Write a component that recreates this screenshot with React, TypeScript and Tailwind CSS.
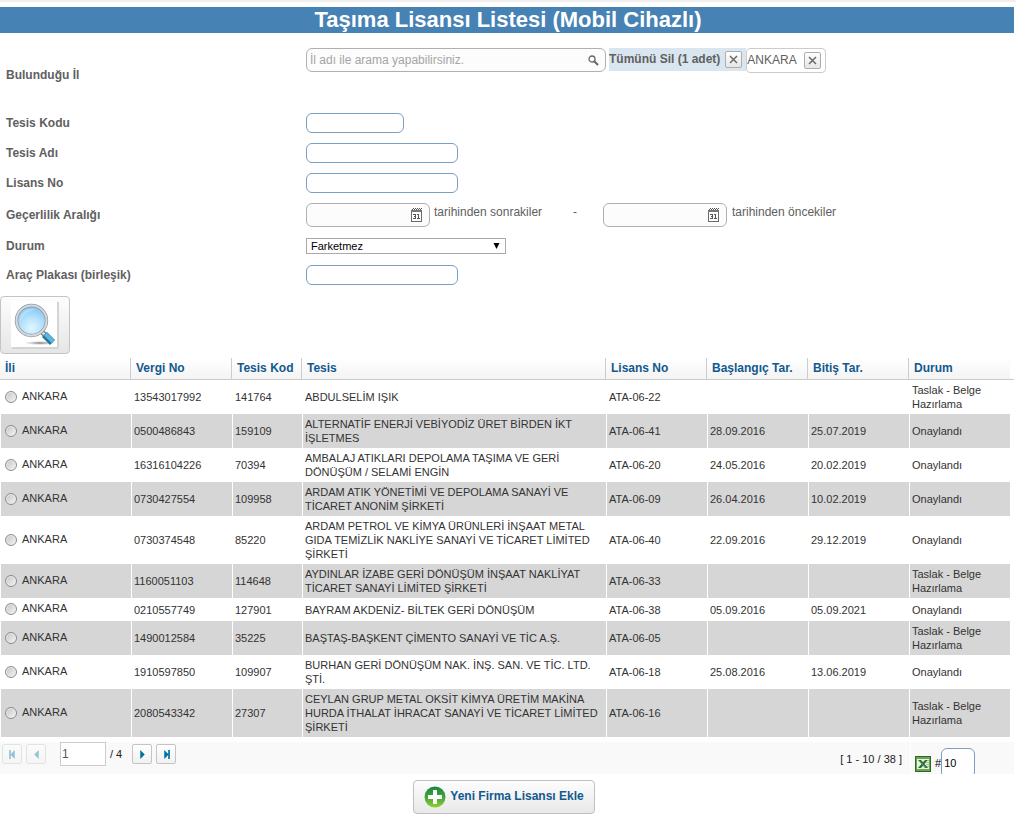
import React from "react";

type Row = {
  tax: string;
  code: string;
  name: string;
  license: string;
  start?: string;
  end?: string;
  status: string;
};

const rows: Row[] = [
  { tax: "13543017992", code: "141764", name: "ABDULSELİM IŞIK", license: "ATA-06-22", status: "Taslak - Belge Hazırlama" },
  { tax: "0500486843", code: "159109", name: "ALTERNATİF ENERJİ VEBİYODİZ ÜRET BİRDEN İKT İŞLETMES", license: "ATA-06-41", start: "28.09.2016", end: "25.07.2019", status: "Onaylandı" },
  { tax: "16316104226", code: "70394", name: "AMBALAJ ATIKLARI DEPOLAMA TAŞIMA VE GERİ DÖNÜŞÜM / SELAMİ ENGİN", license: "ATA-06-20", start: "24.05.2016", end: "20.02.2019", status: "Onaylandı" },
  { tax: "0730427554", code: "109958", name: "ARDAM ATIK YÖNETİMİ VE DEPOLAMA SANAYİ VE TİCARET ANONİM ŞİRKETİ", license: "ATA-06-09", start: "26.04.2016", end: "10.02.2019", status: "Onaylandı" },
  { tax: "0730374548", code: "85220", name: "ARDAM PETROL VE KİMYA ÜRÜNLERİ İNŞAAT METAL GIDA TEMİZLİK NAKLİYE SANAYİ VE TİCARET LİMİTED ŞİRKETİ", license: "ATA-06-40", start: "22.09.2016", end: "29.12.2019", status: "Onaylandı" },
  { tax: "1160051103", code: "114648", name: "AYDINLAR İZABE GERİ DÖNÜŞÜM İNŞAAT NAKLİYAT TİCARET SANAYİ LİMİTED ŞİRKETİ", license: "ATA-06-33", status: "Taslak - Belge Hazırlama" },
  { tax: "0210557749", code: "127901", name: "BAYRAM AKDENİZ- BİLTEK GERİ DÖNÜŞÜM", license: "ATA-06-38", start: "05.09.2016", end: "05.09.2021", status: "Onaylandı" },
  { tax: "1490012584", code: "35225", name: "BAŞTAŞ-BAŞKENT ÇİMENTO SANAYİ VE TİC A.Ş.", license: "ATA-06-05", status: "Taslak - Belge Hazırlama" },
  { tax: "1910597850", code: "109907", name: "BURHAN GERİ DÖNÜŞÜM NAK. İNŞ. SAN. VE TİC. LTD. ŞTİ.", license: "ATA-06-18", start: "25.08.2016", end: "13.06.2019", status: "Onaylandı" },
  { tax: "2080543342", code: "27307", name: "CEYLAN GRUP METAL OKSİT KİMYA ÜRETİM MAKİNA HURDA İTHALAT İHRACAT SANAYİ VE TİCARET LİMİTED ŞİRKETİ", license: "ATA-06-16", status: "Taslak - Belge Hazırlama" },
];

const columns = ["İli", "Vergi No", "Tesis Kod", "Tesis", "Lisans No", "Başlangıç Tar.", "Bitiş Tar.", "Durum"];

const inputClass = "h-5 rounded-md border border-[#7a9fc2] bg-white px-1 outline-none";

function Field({ id, label, height, children }: { id: string; label: string; height: string; children: React.ReactNode }) {
  return (
    <div className={`flex items-center ${height}`}>
      <label htmlFor={id} className="w-[300px] shrink-0 font-bold">
        {label}
      </label>
      {children}
    </div>
  );
}

function CalendarIcon() {
  return (
    <svg width="12" height="14" viewBox="0 0 12 14" shapeRendering="crispEdges">
      <path d="M0.5 3.500h10v10h-10z" fill="#fdfdfd" stroke="#6a6a6a" />
      <path d="M0 2h11v2H0z" fill="#777" />
      <path d="M1 1h1v1H1zM3 1h1v1H3zM5 1h1v1H5zM7 1h1v1H7zM9 1h1v1H9zM2 0h1v1H2zM4 0h1v1H4zM6 0h1v1H6zM8 0h1v1H8zM10 0h1v1h-1z" fill="#555" />
      <path d="M2 6h3v5H2v-1h2V9H3V8h1V7H2zM6 6h2v4h1v1H6v-1h1V7H6z" fill="#555" />
    </svg>
  );
}

function DateBox({ id, label }: { id: string; label: string }) {
  return (
    <div className="flex h-6 w-[124px] items-center rounded-md border border-[#b0b0b0] bg-[#fcfcfc] pr-1.5">
      <input id={id} aria-label={label} className="h-full w-full min-w-0 bg-transparent px-1 outline-none" />
      <button type="button" aria-label="Takvim" className="shrink-0">
        <CalendarIcon />
      </button>
    </div>
  );
}

function CloseButton({ label }: { label: string }) {
  return (
    <button
      type="button"
      aria-label={label}
      className="flex size-[17px] items-center justify-center rounded-xs border border-[#adadad] bg-linear-to-b from-white to-[#e6e6e6]"
    >
      <svg width="9" height="9" viewBox="0 0 9 9">
        <path d="M1 1l7 7M8 1l-7 7" stroke="#6a6a6a" strokeWidth="1.500" />
      </svg>
    </button>
  );
}

function PagerButton({ label, path, disabled }: { label: string; path: string; disabled?: boolean }) {
  return (
    <button
      type="button"
      aria-label={label}
      disabled={disabled}
      className="flex size-5 items-center justify-center rounded-xs border border-[#c4c4c4] bg-linear-to-b from-white to-[#f1f1f1] text-[#00729f] disabled:opacity-40"
    >
      <svg width="9" height="9" viewBox="0 0 8 8" fill="currentColor">
        <path d={path} />
      </svg>
    </button>
  );
}

function BigMagnifier() {
  return (
    <svg width="48" height="50" viewBox="0 0 48 50">
      <defs>
        <radialGradient id="lens" cx="0.5" cy="0.75" r="0.75">
          <stop offset="0" stopColor="#e2f7ff" />
          <stop offset="0.500" stopColor="#b4e0fc" />
          <stop offset="1" stopColor="#7cc2f6" />
        </radialGradient>
        <radialGradient id="shade">
          <stop offset="0" stopColor="#555" stopOpacity="0.8" />
          <stop offset="1" stopColor="#999" stopOpacity="0" />
        </radialGradient>
      </defs>
      <path d="M1 2h47v47H1z" fill="#d4d4d4" />
      <path d="M0 1h46v46H0z" fill="#fff" />
      <ellipse cx="29" cy="43" rx="16" ry="2" fill="url(#shade)" />
      <path d="M30 31l5 5" stroke="#6f797e" strokeWidth="5" />
      <path d="M30 31l5 5" stroke="#d5dadd" strokeWidth="2.500" />
      <path d="M33.500 34.500l8 8" stroke="#27749b" strokeWidth="7" />
      <path d="M34.500 34l7.500 7.500" stroke="#59b8dd" strokeWidth="4" />
      <circle cx="20.500" cy="20.500" r="15" fill="url(#lens)" stroke="#8d999f" strokeWidth="3.400" />
      <circle cx="20.500" cy="20.500" r="15" fill="none" stroke="#d6dadc" strokeWidth="2" />
      <path d="M9 22C8 12 16 8 24 9c-7 3-13 7-15 13z" fill="#fff" opacity="0.250" />
    </svg>
  );
}

function ExcelIcon() {
  return (
    <svg width="16" height="16" viewBox="0 0 16 16">
      <rect x="0.500" y="0.500" width="15" height="15" fill="#6aa552" stroke="#2d6a20" />
      <path d="M2 3h12v10H2z" fill="#e9f2e4" />
      <path d="M11 4.500h3M11 6.500h3M11 8.500h3M11 10.500h3" stroke="#8fb47e" strokeWidth="0.800" />
      <path d="M3 4h3l2 2.200L10 4h2.500L9.500 8l3.500 4h-3L8 9.800 6 12H3l3.500-4z" fill="#286b35" />
      <path d="M4 4.500l6.500 7" stroke="#7fb96c" strokeWidth="0.800" />
    </svg>
  );
}

function PlusIcon() {
  return (
    <svg width="22" height="22" viewBox="0 0 22 22">
      <defs>
        <linearGradient id="plus" x1="0" y1="0" x2="0" y2="1">
          <stop offset="0" stopColor="#16883f" />
          <stop offset="0.500" stopColor="#45a33a" />
          <stop offset="1" stopColor="#8ed12c" />
        </linearGradient>
      </defs>
      <circle cx="11" cy="11" r="10.500" fill="url(#plus)" />
      <path d="M9 4h4v5h5v4h-5v5H9v-5H4V9h5z" fill="#fff" />
    </svg>
  );
}

export default function App() {
  return (
    <div className="border-t-2 border-[#f0f0f0] bg-white pr-0.5 font-['Liberation_Sans',Arial,sans-serif] text-xs text-[#606060]">
      <h1 className="mt-[5px] h-[26px] bg-[#4682b4] pl-0.5 text-center text-[22px] leading-[26px] font-bold text-white">
        Taşıma Lisansı Listesi (Mobil Cihazlı)
      </h1>

      <form className="pt-[15px] pl-1.5" onSubmit={(e) => e.preventDefault()}>
        <div className="flex h-[60px] pb-1.5">
          <label htmlFor="province" className="w-[300px] shrink-0 self-center font-bold">
            Bulunduğu İl
          </label>
          <div className="flex h-6 w-[300px] items-center rounded-md border border-[#b0b0b0] bg-[#fcfcfc] pr-1.5">
            <input
              id="province"
              placeholder="İl adı ile arama yapabilirsiniz."
              className="h-full w-full min-w-0 bg-transparent px-[3px] outline-none placeholder:text-[#a5a5a5]"
            />
            <button type="button" aria-label="Ara" className="shrink-0">
              <svg width="11" height="11" viewBox="0 0 11 11" fill="none" stroke="#666">
                <circle cx="4" cy="4" r="3" strokeWidth="1.300" />
                <path d="M6 6l4 4" strokeWidth="2" />
              </svg>
            </button>
          </div>
          <div className="ml-[3px] flex h-[23px] items-center gap-[5px] bg-[#d9e5ef] pr-1 font-bold">
            <span className="pb-0.5">Tümünü Sil (1 adet)</span>
            <CloseButton label="Tümünü Sil" />
          </div>
          <div className="flex h-[25px] items-center gap-[7px] rounded-sm border border-[#cccccc] bg-white pr-1">
            <span className="pb-0.5">ANKARA</span>
            <CloseButton label="ANKARA sil" />
          </div>
        </div>
        <Field id="code" label="Tesis Kodu" height="h-[30px]">
          <input id="code" className={`${inputClass} w-[98px]`} />
        </Field>
        <Field id="name" label="Tesis Adı" height="h-[30px]">
          <input id="name" className={`${inputClass} w-[152px]`} />
        </Field>
        <Field id="license" label="Lisans No" height="h-[30px]">
          <input id="license" className={`${inputClass} w-[152px]`} />
        </Field>
        <Field id="after" label="Geçerlilik Aralığı" height="h-[34px]">
          <div className="flex leading-[18px]">
            <DateBox id="after" label="Geçerlilik Aralığı" />
            <span className="w-[143px] pl-1">tarihinden sonrakiler</span>
            <span className="w-[30px]">-</span>
            <DateBox id="before" label="tarihinden öncekiler" />
            <span className="pl-[5px]">tarihinden öncekiler</span>
          </div>
        </Field>
        <Field id="status" label="Durum" height="h-7">
          <div className="relative">
            <select id="status" className="block h-4 w-[200px] appearance-none border border-[#a9a9a9] bg-white pl-1 text-[11px] leading-[14px] text-black outline-none">
              <option>Farketmez</option>
            </select>
            <svg className="pointer-events-none absolute top-[5px] right-1.5" width="7" height="6" viewBox="0 0 7 6">
              <path d="M0.500 0h6L3.500 6z" fill="#000" />
            </svg>
          </div>
        </Field>
        <Field id="plate" label="Araç Plakası (birleşik)" height="h-[30px]">
          <input id="plate" className={`${inputClass} w-[152px]`} />
        </Field>
      </form>

      <button
        type="button"
        aria-label="Listele"
        className="mt-1.5 flex h-[58px] w-[70px] items-center justify-center rounded-sm border border-[#c4c4c4] bg-linear-to-b from-[#fdfdfd] to-[#e6e6e6]"
      >
        <BigMagnifier />
      </button>

      <table className="mt-1 w-full table-fixed border-separate border-spacing-0 text-left">
        <colgroup>
          <col className="w-[131px]" />
          <col className="w-[101px]" />
          <col className="w-[70px]" />
          <col />
          <col className="w-[101px]" />
          <col className="w-[101px]" />
          <col className="w-[101px]" />
          <col className="w-[101px]" />
          <col className="w-1" />
        </colgroup>
        <thead>
          <tr className="text-[#12598f]">
            {columns.map((c) => (
              <th
                key={c}
                scope="col"
                className="h-[22px] border-r border-b border-[#cccccc] bg-linear-to-b from-white to-[#f3f3f3] py-0 pl-[5px] leading-[21px] nth-8:border-r-0"
              >
                {c}
              </th>
            ))}
            <td className="border-b border-[#cccccc]" />
          </tr>
        </thead>
        <tbody className="text-[11px] leading-[14px] text-[#333]">
          {rows.map((r) => (
            <tr
              key={r.tax}
              className="*:border-l *:border-white *:py-[3px] *:pr-[3px] *:pl-0.5 even:bg-[#d6d6d6] *:last:border-l-0 *:last:bg-white *:last:p-0"
            >
              <td>
                <label className="flex h-[17px] items-start gap-[5px] pl-0.5">
                  <input
                    type="radio"
                    name="license-row"
                    className="mt-0.5 size-3 appearance-none rounded-full border border-[#8c8c8c] bg-linear-to-br from-[#c4c4c4] to-[#f6f6f6] inset-ring inset-ring-[#ededed] checked:from-[#333] checked:to-[#777]"
                  />
                  <span>ANKARA</span>
                </label>
              </td>
              <td>{r.tax}</td>
              <td>{r.code}</td>
              <td>{r.name}</td>
              <td>{r.license}</td>
              <td>{r.start}</td>
              <td>{r.end}</td>
              <td>{r.status}</td>
              <td />
            </tr>
          ))}
        </tbody>
      </table>

      <div className="mt-[5px] flex h-8 gap-px overflow-hidden text-[11px] text-[#222]">
        <div className="flex flex-1 items-start bg-[#f9f9f9] pr-2 pl-0.5">
          <div className="flex gap-1 pt-0.5">
            <PagerButton label="İlk sayfa" disabled path="M1 0h1.500v3.500L6 0v8L2.500 4.500V8H1z" />
            <PagerButton label="Önceki sayfa" disabled path="M6 0v8L2 4z" />
          </div>
          <input
            aria-label="Sayfa"
            defaultValue="1"
            className="ml-3.5 h-6 w-[46px] border border-[#cccccc] bg-white px-px text-xs text-[#555] outline-none"
          />
          <span className="pl-1 leading-6">/ 4</span>
          <div className="flex gap-1 pt-0.5 pl-2.5">
            <PagerButton label="Sonraki sayfa" path="M2 0v8l4-4z" />
            <PagerButton label="Son sayfa" path="M7 0H5.500v3.500L2 0v8l3.500-3.500V8H7z" />
          </div>
          <span className="ml-auto leading-[34px]">[ 1 - 10 / 38 ]</span>
        </div>
        <div className="flex w-[103px] items-start bg-[#f9f9f9] pt-1.5 pl-1">
          <button type="button" aria-label="Excel" className="mt-2">
            <ExcelIcon />
          </button>
          <label htmlFor="page-size" className="pl-1 leading-[30px] text-black">
            #
          </label>
          <input
            id="page-size"
            defaultValue="10"
            className="h-[30px] w-[34px] rounded-md border border-[#7a9fc2] bg-white px-0.5 text-black outline-none"
          />
        </div>
      </div>

      <div className="flex justify-center pt-1.5 pr-1.5">
        <button
          type="button"
          className="flex h-[34px] items-center gap-1 rounded-sm border border-[#c0c0c0] bg-linear-to-b from-[#fdfdfd] to-[#e8e8e8] px-2.5 font-bold text-[#12598f]"
        >
          <PlusIcon />
          <span className="pb-0.5">Yeni Firma Lisansı Ekle</span>
        </button>
      </div>
    </div>
  );
}
